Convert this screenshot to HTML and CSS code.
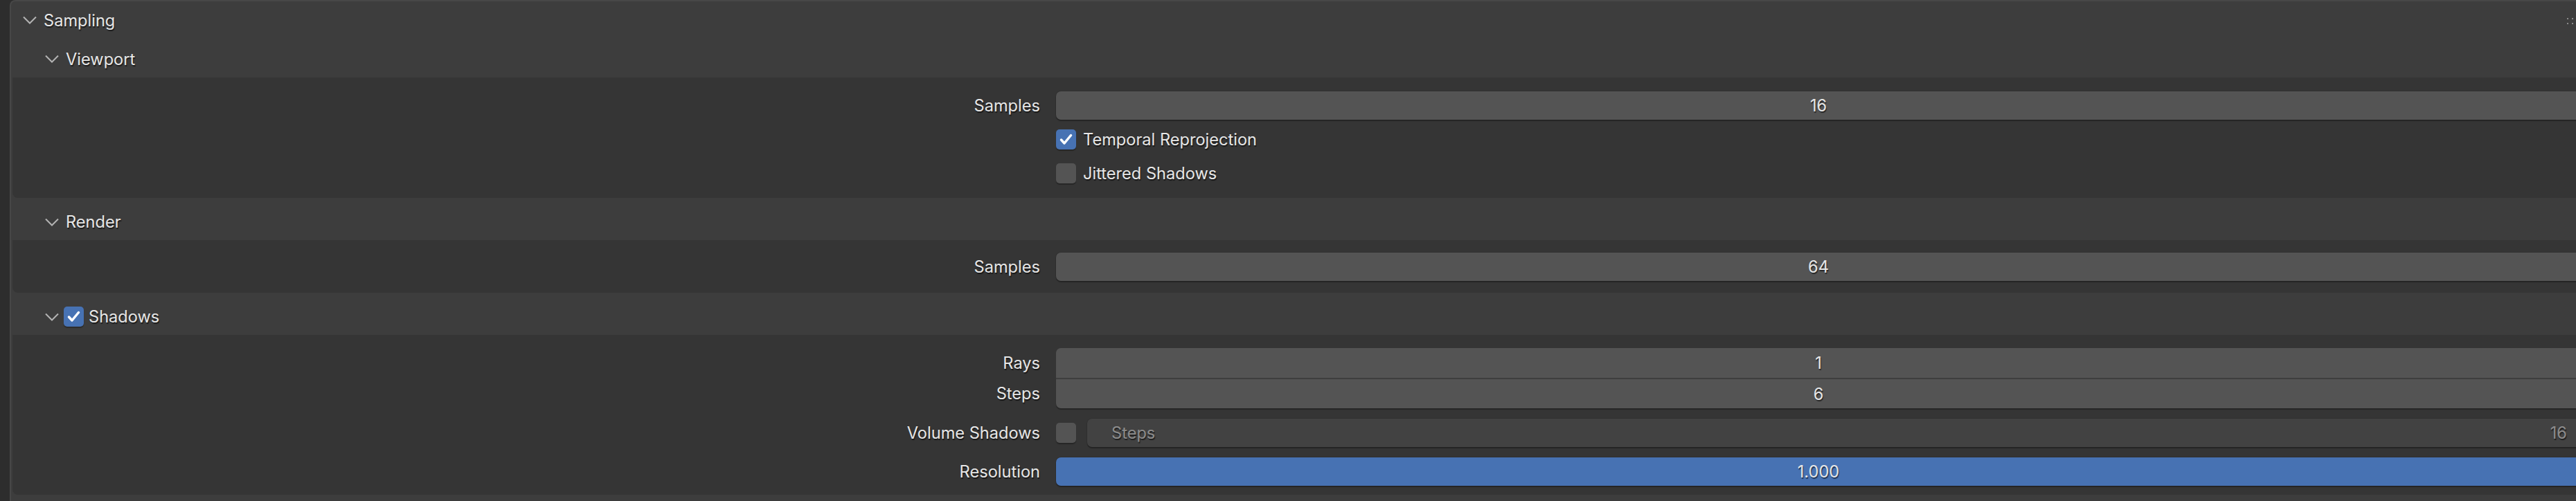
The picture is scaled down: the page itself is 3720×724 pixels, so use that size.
FILE: index.html
```html
<!DOCTYPE html>
<html>
<head>
<meta charset="utf-8">
<link rel="stylesheet" href="styles.css">
</head>
<body>
<div class="panel">
  <div class="panel-header">
    <svg class="chev" width="20" height="12" viewBox="0 0 20 12"><polyline points="1,1.5 10,10.5 19,1.5"/></svg>
    <span class="title">Sampling</span>
    <span class="grip"><i></i><i></i><i></i><i></i></span>
  </div>

  <div class="sub">
    <div class="sub-header flush">
      <svg class="chev" width="20" height="12" viewBox="0 0 20 12"><polyline points="1,1.5 10,10.5 19,1.5"/></svg>
      <span class="title">Viewport</span>
    </div>
    <div class="sub-body vp">
      <div class="row"><div class="label">Samples</div><div class="field"><span>16</span></div></div>
      <div class="row"><div class="label"></div>
        <div class="checkrow"><span class="box on"><svg width="29" height="29" viewBox="0 0 29 29"><polyline points="7.5,15 12,20 21.5,8.5"/></svg></span><span class="ctext">Temporal Reprojection</span></div>
      </div>
      <div class="row"><div class="label"></div>
        <div class="checkrow"><span class="box"></span><span class="ctext">Jittered Shadows</span></div>
      </div>
    </div>
  </div>

  <div class="sub">
    <div class="sub-header">
      <svg class="chev" width="20" height="12" viewBox="0 0 20 12"><polyline points="1,1.5 10,10.5 19,1.5"/></svg>
      <span class="title">Render</span>
    </div>
    <div class="sub-body rd">
      <div class="row"><div class="label">Samples</div><div class="field"><span>64</span></div></div>
    </div>
  </div>

  <div class="sub">
    <div class="sub-header">
      <svg class="chev" width="20" height="12" viewBox="0 0 20 12"><polyline points="1,1.5 10,10.5 19,1.5"/></svg>
      <span class="box on hbox"><svg width="29" height="29" viewBox="0 0 29 29"><polyline points="7.5,15 12,20 21.5,8.5"/></svg></span>
      <span class="title">Shadows</span>
    </div>
    <div class="sub-body sh">
      <div class="row r-top"><div class="label">Rays</div><div class="field top"><span>1</span></div></div>
      <div class="row r-bot"><div class="label">Steps</div><div class="field bot"><span>6</span></div></div>
      <div class="row r-vol"><div class="label">Volume Shadows</div>
        <div class="volctl"><span class="box"></span><div class="field dis"><span class="fl">Steps</span><span class="fr">16</span></div></div>
      </div>
      <div class="row r-res"><div class="label">Resolution</div><div class="field blue"><span>1.000</span></div></div>
    </div>
  </div>
</div>
</body>
</html>
```

FILE: styles.css
```css
html, body {
  margin: 0;
  padding: 0;
  overflow: hidden;
}
body {
  width: 3720px;
  height: 724px;
  background: #2d2d2d;
  font-family: "Inter", "Noto Sans", sans-serif;
  font-size: 23.6px;
  color: #e6e6e6;
}
.panel {
  margin-left: 14px;
  width: 3720px;
  height: 722px;
  background: #3d3d3d;
  border-left: 2px solid #474747;
  border-top: 2px solid #474747;
  border-top-left-radius: 8px;
  padding-bottom: 9px;
}
.title, .label, .ctext, .field span {
  text-shadow: 1px 2px 1px rgba(0, 0, 0, 0.55);
  white-space: nowrap;
}
.chev polyline {
  fill: none;
  stroke: #b4b4b4;
  stroke-width: 2;
}
.chev { flex: none; }

.panel-header {
  height: 56px;
  box-sizing: border-box;
  padding: 0 20px 2px 17px;
  display: flex;
  align-items: center;
}
.panel-header .title { margin-left: 10px; }
.grip {
  margin-left: auto;
  margin-top: 2px;
  display: grid;
  grid-template-columns: 2px 2px;
  gap: 5px;
}
.grip i {
  width: 2px;
  height: 2px;
  background: #8a8a8a;
}

.sub { margin-left: 2px; }
.sub-header {
  height: 61px;
  box-sizing: border-box;
  padding: 8px 0 0 47px;
  display: flex;
  align-items: center;
}
.sub-header.flush {
  height: 54px;
  padding-top: 0;
}
.sub-header .title { margin-left: 10px; }
.sub-header .hbox { margin-left: 7px; }
.sub-header .hbox + .title { margin-left: 7px; }

.sub-body {
  background: #353535;
  border-bottom-left-radius: 8px;
  display: grid;
  grid-template-columns: 1484px 2202px;
  column-gap: 23px;
}
.row { display: contents; }
.label {
  text-align: right;
  align-self: center;
}
.vp { padding: 16px 0 11px; grid-auto-rows: 49px; }
.rd { padding: 14px 0 14px; grid-auto-rows: 48px; }
.sh {
  padding: 19px 0 13px;
  grid-template-rows: 43px 44px 56px 56px;
}
.r-vol .label, .r-vol .volctl { margin-top: 15px; }
.r-res .label, .r-res .field { margin-top: 15px; }

.field {
  align-self: center;
  height: 41px;
  background: #545454;
  border-radius: 7px;
  box-shadow: 0 2px 1px rgba(0, 0, 0, 0.28), 0 0 0 1px rgba(0, 0, 0, 0.08);
  display: flex;
  align-items: center;
  justify-content: center;
}
.field.top {
  height: 43px;
  border-radius: 7px 7px 0 0;
  box-shadow: none;
}
.field.bot {
  height: 44px;
  border-radius: 0 0 7px 7px;
  border-top: 2px solid #3e3e3e;
  box-sizing: border-box;
  box-shadow: 0 2px 1px rgba(0, 0, 0, 0.28);
}
.field.blue { background: #4772b3; }
.field.dis {
  background: #424242;
  justify-content: space-between;
  padding: 0 20px 0 35px;
  color: #8c8c8c;
  flex: 1;
}
.volctl {
  display: flex;
  align-items: center;
  gap: 16px;
  height: 41px;
  align-self: center;
}

.checkrow {
  display: flex;
  align-items: center;
  align-self: center;
}
.ctext { margin-left: 10px; }
.box {
  flex: none;
  width: 29px;
  height: 29px;
  border-radius: 5px;
  background: #545454;
  box-shadow: 0 2px 1px rgba(0, 0, 0, 0.28);
  display: block;
}
.box.on { background: #4772b3; }
.box svg { display: block; }
.box polyline {
  fill: none;
  stroke: #ffffff;
  stroke-width: 3.5;
  stroke-linecap: round;
  stroke-linejoin: round;
}
```
